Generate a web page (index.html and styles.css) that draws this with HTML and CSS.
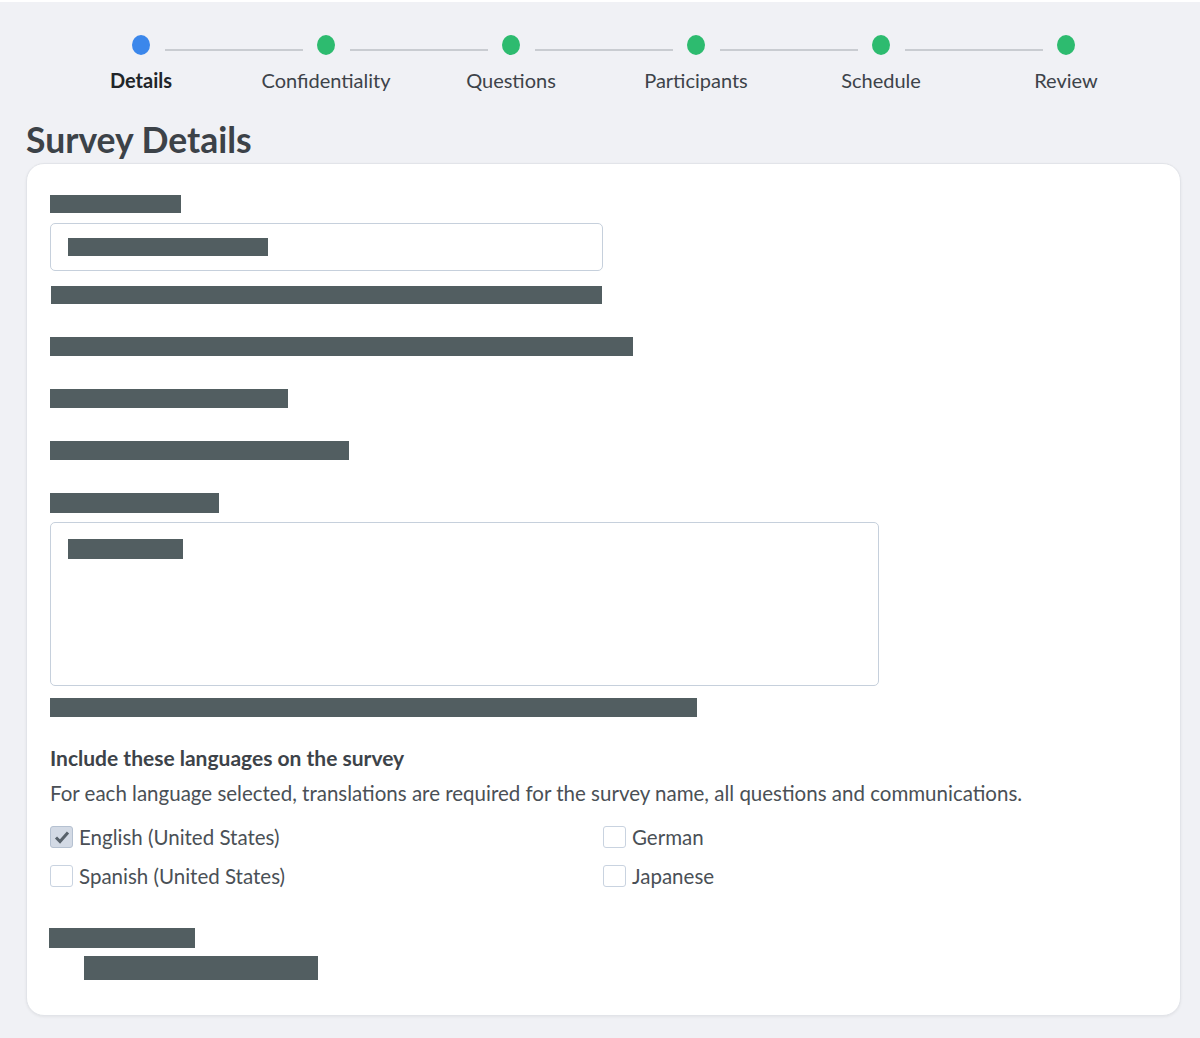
FILE: index.html
```html
<html>
  <head>
    <title>Survey Details</title>
    <meta name="viewport" content="width=device-width, initial-scale=1">
    <link rel="stylesheet" href="styles.css">
  </head>

  <body>
    <div class="stepper">
      <div class="track">
        <span class="dot current"></span><span class="line"></span>
        <span class="dot"></span><span class="line"></span>
        <span class="dot"></span><span class="line"></span>
        <span class="dot"></span><span class="line"></span>
        <span class="dot"></span><span class="line"></span>
        <span class="dot"></span>
      </div>
      <div class="labels">
        <span class="step-label current">Details</span>
        <span class="step-label">Confidentiality</span>
        <span class="step-label">Questions</span>
        <span class="step-label">Participants</span>
        <span class="step-label">Schedule</span>
        <span class="step-label">Review</span>
      </div>
    </div>

    <h1 class="page-title">Survey Details</h1>

    <div class="card">
      <div class="bar" style="width:131px"></div>
      <div class="field">
        <div class="bar" style="width:200px"></div>
      </div>
      <div class="bar help" style="width:551px"></div>

      <div class="bar row" style="width:583px"></div>
      <div class="bar row" style="width:238px"></div>
      <div class="bar row" style="width:299px"></div>

      <div class="bar row tall" style="width:169px"></div>
      <div class="textarea">
        <div class="bar tall" style="width:115px"></div>
      </div>
      <div class="bar after-area" style="width:647px"></div>

      <div class="lang-title">Include these languages on the survey</div>
      <div class="lang-desc">For each language selected, translations are required for the survey name, all questions and communications.</div>

      <div class="lang-grid">
        <label class="lang"><span class="box checked">
          <svg width="16" height="14" viewBox="0 0 16 14"><path d="M2 7.5 L6 11.5 L14 2.5" fill="none" stroke="#58626b" stroke-width="3"/></svg>
        </span>English (United States)</label>
        <label class="lang"><span class="box"></span>German</label>
        <label class="lang"><span class="box"></span>Spanish (United States)</label>
        <label class="lang"><span class="box"></span>Japanese</label>
      </div>

      <div class="bar tall footer-label" style="width:146px"></div>
      <div class="bar footer-value" style="width:234px"></div>
    </div>
  </body>
</html>
```

FILE: styles.css
```css
body {
  margin: 0;
  padding: 0 19px 23px 26px;
  background-color: #f0f1f5;
  border-top: 2px solid #ffffff;
  font-family: "Lato", "Liberation Sans", Arial, sans-serif;
  color: #3f454b;
}

/* ----------------------------------- Stepper */
.stepper {
  width: 1110px;
  margin: 0 auto;
  padding-top: 33px;
}

.track {
  display: flex;
  align-items: center;
  padding: 0 83.5px;
}

.dot {
  width: 18px;
  height: 20px;
  border-radius: 50%;
  background: #2dbb6f;
  flex: none;
}

.dot.current {
  background: #3b87eb;
}

.line {
  flex: 1;
  height: 2px;
  margin: 10px 14px 0 15px;
  background: #c9ccd1;
}

.labels {
  display: grid;
  grid-template-columns: repeat(6, 185px);
  margin-top: 13px;
}

.step-label {
  text-align: center;
  font-size: 20px;
  line-height: 24px;
  color: #3d4349;
}

.step-label.current {
  font-weight: bold;
  color: #212529;
}
/* ----------------------------------- */

.page-title {
  margin: 28px 0 3px 0;
  font-size: 35.5px;
  line-height: 40px;
  font-weight: bold;
  color: #3c4248;
}

/* ----------------------------------- Card */
.card {
  background: #ffffff;
  border: 1px solid #e2e4e9;
  border-radius: 18px;
  box-shadow: 0 1px 3px rgba(0, 0, 0, 0.06);
  padding: 31px 24px 35px 23px;
}

.bar {
  height: 18px;
  background: #525e61;
}

.bar.tall {
  height: 20px;
}

.field {
  width: 517px;
  height: 46px;
  margin-top: 10px;
  padding: 0 17px;
  border: 1px solid #c6d0dc;
  border-radius: 5px;
  display: flex;
  align-items: center;
}

.help {
  margin: 15px 0 0 1px;
}

.row {
  margin-top: 33px;
  height: 19px;
}

.textarea {
  width: 793px;
  height: 146px;
  margin-top: 9px;
  padding: 16px 17px 0 17px;
  border: 1px solid #c6d0dc;
  border-radius: 5px;
}

.after-area {
  height: 19px;
  margin-top: 12px;
}
/* ----------------------------------- */

/* ----------------------------------- Languages */
.lang-title {
  margin-top: 29px;
  font-size: 21px;
  line-height: 24px;
  font-weight: bold;
  color: #3d4349;
}

.lang-desc {
  margin-top: 11px;
  font-size: 20.5px;
  line-height: 24px;
  color: #4a5056;
}

.lang-grid {
  display: grid;
  grid-template-columns: 553px 553px;
  row-gap: 15px;
  margin-top: 20px;
}

.lang {
  display: flex;
  align-items: center;
  height: 24px;
  font-size: 20.5px;
  color: #4a5056;
}

.box {
  width: 21px;
  height: 20px;
  margin-right: 6px;
  border: 1px solid #c9d3e0;
  border-radius: 3px;
  background: #ffffff;
  display: flex;
  align-items: center;
  justify-content: center;
}

.box.checked {
  background: #d3dae5;
  border-color: #b5c1d1;
}
/* ----------------------------------- */

.footer-label {
  margin: 40px 0 0 -1px;
}

.footer-value {
  height: 24px;
  margin: 8px 0 0 34px;
}
```
